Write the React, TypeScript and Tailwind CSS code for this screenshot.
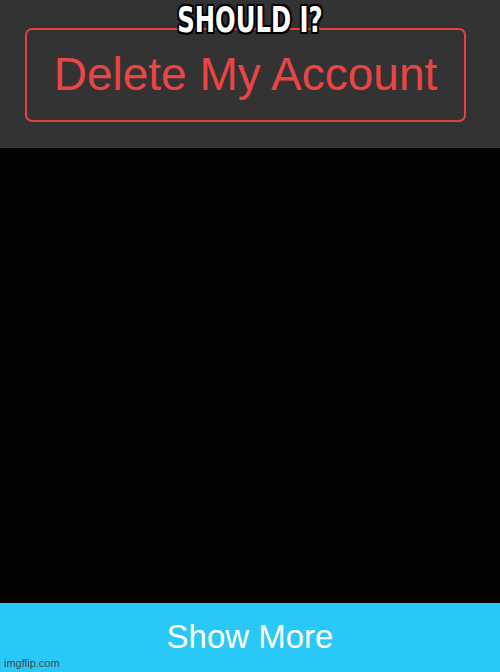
import React from 'react';

const outline =
  '2px 2px 0 #000, -2px -2px 0 #000, 2px -2px 0 #000, -2px 2px 0 #000, 0 2px 0 #000, 0 -2px 0 #000, 2px 0 0 #000, -2px 0 0 #000, 0 0 4px #000';

export default function App() {
  return (
    <div className="relative flex h-[672px] w-[500px] flex-col overflow-hidden bg-black font-['Liberation_Sans',Arial,sans-serif]">
      {/* meme caption over the screenshot */}
      <div
        className="absolute left-0 right-0 top-[2px] scale-x-[0.75] text-center font-['DejaVu_Sans_Condensed','DejaVu_Sans',sans-serif] text-[36px] font-bold leading-none text-white"
        style={{ textShadow: outline }}
      >
        SHOULD I?
      </div>

      <div className="flex h-[148px] shrink-0 items-start bg-[#333333] px-[25px] pt-[28px]">
        <button className="flex h-[94px] w-[441px] items-center justify-center rounded-[7px] border-2 border-[#e6413f] pb-[2px] text-[46px] leading-none text-[#ea4444]">
          Delete My Account
        </button>
      </div>

      <div className="flex-1 bg-[#020203]" />

      <div className="relative flex h-[69px] shrink-0 items-center justify-center bg-[#29c8f6] pb-[2px]">
        <span className="text-[33px] leading-none text-white">Show More</span>
        <span className="absolute bottom-[3px] left-[4px] text-[11px] leading-none text-[#3b4a55]">imgflip.com</span>
      </div>
    </div>
  );
}
